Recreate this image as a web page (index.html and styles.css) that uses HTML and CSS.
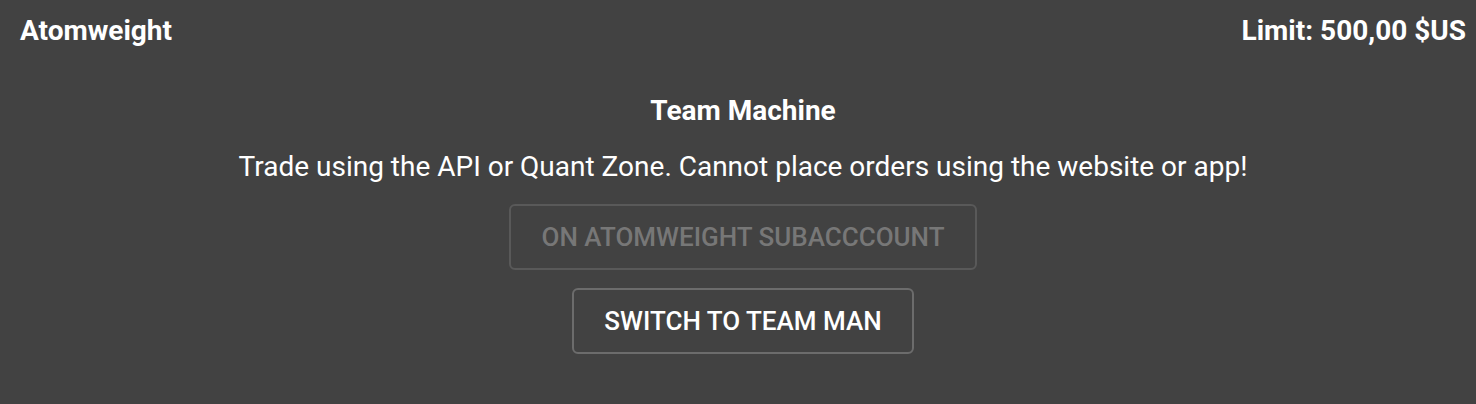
FILE: index.html
```html
<!DOCTYPE html>
<html lang="en">
<head>
    <meta charset="UTF-8">
    <meta name="viewport" content="width=device-width, initial-scale=1.0">
    <title>Team Machine</title>
    <link rel="stylesheet" href="styles.css">
</head>
<body>
    <div class="header">
        <span class="account-name">Atomweight</span>
        <span class="limit">Limit: 500,00 $US</span>
    </div>
    <div class="content">
        <h2 class="title">Team Machine</h2>
        <p class="description">Trade using the API or Quant Zone. Cannot place orders using the website or app!</p>
        <button class="btn" disabled>On Atomweight subacccount</button>
        <button class="btn">Switch to Team Man</button>
    </div>
</body>
</html>
```

FILE: styles.css
```css
body {
    font-family: Roboto, "Noto Sans", sans-serif;
    background-color: #424242;
    color: #ffffff;
    margin: 0;
    padding: 0;
}

.header {
    display: flex;
    justify-content: space-between;
    align-items: center;
    padding: 15px 10px 0 20px;
    font-size: 28px;
    line-height: 32px;
    font-weight: 700;
}

.content {
    display: flex;
    flex-direction: column;
    align-items: center;
    padding-left: 10px;
}

.title {
    font-size: 28px;
    line-height: 32px;
    font-weight: 700;
    margin: 48px 0 0;
}

.description {
    font-size: 28px;
    line-height: 32px;
    margin: 24px 0 0;
}

.btn {
    font-family: inherit;
    font-size: 26px;
    font-weight: 500;
    text-transform: uppercase;
    color: #ffffff;
    background: transparent;
    border: 2px solid #6c6c6c;
    border-radius: 6px;
    padding: 0 30px;
    height: 66px;
    margin-top: 18px;
}

.btn:disabled {
    color: #777777;
    border-color: #595959;
    margin-top: 21px;
}
```
